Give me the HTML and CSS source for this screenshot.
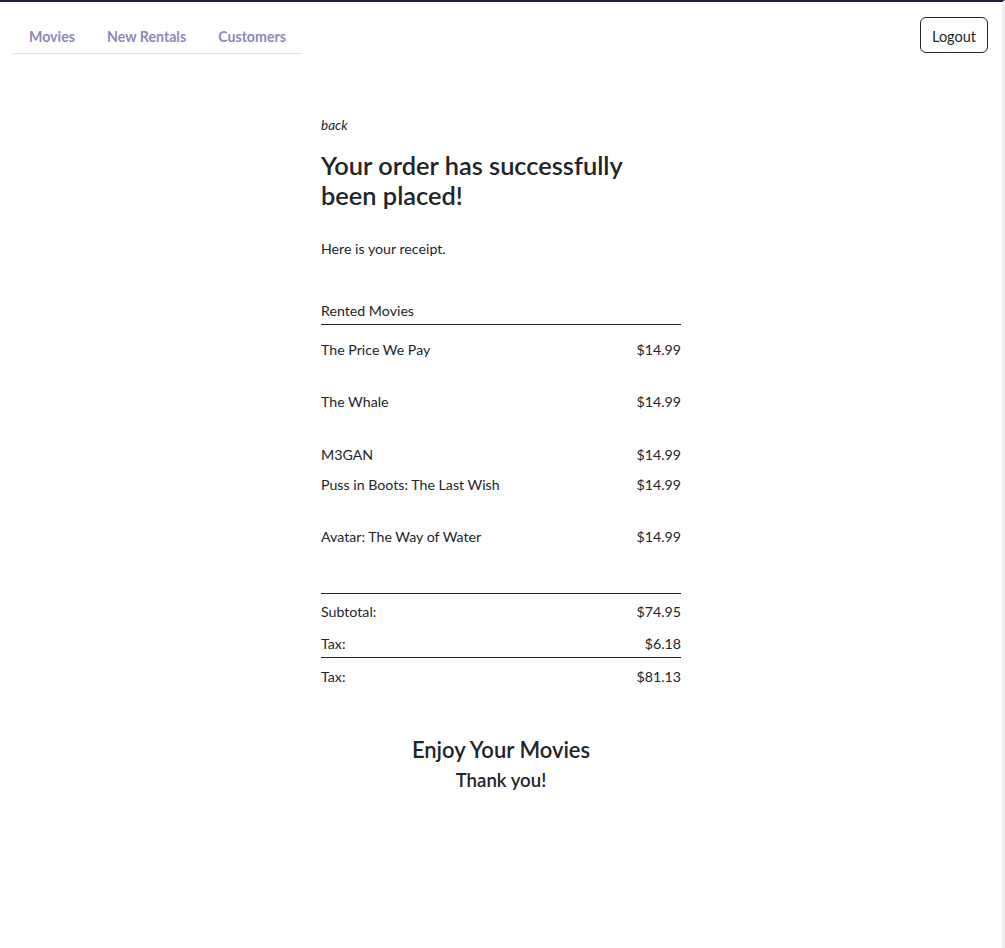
FILE: index.html
```html
<!DOCTYPE html>
<html lang="en">
<head>
<meta charset="utf-8">
<title>Order placed</title>
<link rel="stylesheet" href="styles.css">
</head>
<body>
<div class="page">
  <header class="topbar">
    <nav>
      <ul class="nav">
        <li><a href="#">Movies</a></li>
        <li><a href="#">New Rentals</a></li>
        <li><a href="#">Customers</a></li>
      </ul>
    </nav>
    <button class="logout">Logout</button>
  </header>

  <main class="receipt">
    <a class="back" href="#">back</a>
    <h1 class="title">Your order has successfully been placed!</h1>
    <p class="intro">Here is your receipt.</p>

    <div class="section-head">Rented Movies</div>
    <ul class="items">
      <li class="item gap"><span>The Price We Pay</span><span>$14.99</span></li>
      <li class="item gap wide"><span>The Whale</span><span>$14.99</span></li>
      <li class="item"><span>M3GAN</span><span>$14.99</span></li>
      <li class="item gap"><span>Puss in Boots: The Last Wish</span><span>$14.99</span></li>
      <li class="item gap"><span>Avatar: The Way of Water</span><span>$14.99</span></li>
    </ul>

    <div class="totals">
      <div class="total-row sub"><span>Subtotal:</span><span>$74.95</span></div>
      <div class="total-row tax"><span>Tax:</span><span>$6.18</span></div>
      <div class="total-row grand"><span>Tax:</span><span>$81.13</span></div>
    </div>

    <div class="thanks">
      <h2>Enjoy Your Movies</h2>
      <h3>Thank you!</h3>
    </div>
  </main>
</div>
</body>
</html>
```

FILE: styles.css
```css
html, body {
  margin: 0;
  padding: 0;
  background: #fff;
}
body {
  font-family: Lato, "Noto Sans", sans-serif;
  color: #212529;
}
.page {
  min-height: 948px;
  box-sizing: border-box;
  border-top: 2px solid #1f1b3f;
  border-right: 3px solid #f0f0f0;
}
.topbar {
  display: flex;
  justify-content: space-between;
  align-items: flex-start;
  padding: 15px 14px 0 13px;
}
.nav {
  display: flex;
  list-style: none;
  margin: 1px 0 0;
  padding: 0;
  border-bottom: 1px solid #dee2e6;
}
.nav a {
  display: block;
  padding: 9px 16px 6px;
  line-height: 20px;
  font-size: 14.2px;
  font-weight: 700;
  color: #8c89b9;
  text-decoration: none;
}
.logout {
  width: 68px;
  height: 36px;
  background: #fff;
  border: 1px solid #212529;
  border-radius: 6px;
  font-family: inherit;
  font-size: 14.5px;
  color: #212529;
  padding: 2px 0 0;
}
.receipt {
  width: 360px;
  margin: 0 auto;
  padding-top: 61px;
  font-size: 14.2px;
}
.back {
  display: block;
  font-style: italic;
  font-size: 13.5px;
  color: #212529;
  text-decoration: none;
  line-height: 20px;
}
.title {
  margin: 15px 0 0;
  width: 330px;
  font-size: 25.4px;
  line-height: 30px;
  font-weight: 600;
}
.intro {
  margin: 29px 0 0;
  line-height: 20px;
}
.section-head {
  margin-top: 42px;
  line-height: 20px;
  padding-bottom: 3px;
  border-bottom: 1px solid #212529;
}
.items {
  list-style: none;
  margin: 0;
  padding: 15px 0 0;
}
.item {
  display: flex;
  justify-content: space-between;
  line-height: 20px;
  padding-bottom: 10px;
}
.item.gap {
  padding-bottom: 32px;
}
.item.gap.wide {
  padding-bottom: 33px;
}
.totals {
  margin-top: 14px;
  border-top: 1px solid #212529;
}
.total-row {
  display: flex;
  justify-content: space-between;
  line-height: 20px;
  padding-top: 9px;
  padding-bottom: 3px;
}
.total-row.sub {
  padding-top: 8px;
}
.total-row.grand {
  border-top: 1px solid #212529;
  padding-top: 9px;
}
.thanks {
  text-align: center;
  margin-top: 45px;
}
.thanks h2 {
  margin: 0;
  font-size: 22px;
  line-height: 30px;
  font-weight: 600;
}
.thanks h3 {
  margin: 0;
  font-size: 18.6px;
  line-height: 30px;
  font-weight: 600;
}
```
